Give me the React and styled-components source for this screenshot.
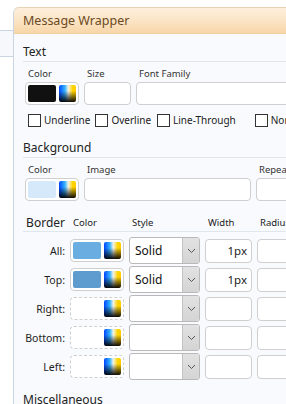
import React from "react";
import styled, { createGlobalStyle } from "styled-components";

const Global = createGlobalStyle`
  html, body { margin: 0; padding: 0; background: #ffffff; }
  body { font-family: "Noto Sans", "Open Sans", sans-serif; color: #222; }
  * { box-sizing: border-box; }
`;

const Page = styled.div`
  width: 286px;
  height: 404px;
  overflow: hidden;
  display: flex;
  align-items: flex-start;
  background: #ffffff;
`;

const Strip = styled.div`
  width: 13px;
  flex: none;
  display: flex;
  flex-direction: column;
`;

const StripTop = styled.div`
  height: 31px;
  border-bottom: 1px solid #c9d5e1;
`;

const StripTab = styled.div`
  height: 26px;
  background: #f6f8fb;
  border-bottom: 1px solid #c9d5e1;
`;

const Panel = styled.div`
  flex: 1;
  min-width: 0;
  height: 420px;
  margin-top: 7px;
  display: flex;
  flex-direction: column;
  border-left: 1px solid #c9d5e1;
  border-top-left-radius: 6px;
  background: #f9fafd;
`;

const Header = styled.div`
  flex: none;
  height: 27px;
  display: flex;
  align-items: center;
  padding-left: 9px;
  border-top: 1px solid #e6d3b3;
  border-bottom: 1px solid #efcf9c;
  border-top-left-radius: 5px;
  background: linear-gradient(to bottom, #fdefdc 0%, #fbe3c3 55%, #f8d6a8 100%);
  color: #6b4a22;
  font-size: 12.5px;
  white-space: nowrap;
`;

const Body = styled.div`
  flex: none;
  padding: 10px 0 0 9px;
  display: flex;
  flex-direction: column;
  white-space: nowrap;
`;

const SectionTitle = styled.div`
  font-size: 12px;
  line-height: 16px;
  height: 18px;
  color: #222;
  border-bottom: 1px solid #dfe6ee;
  margin-top: ${(p) => p.$mt || 0}px;
`;

const FieldRow = styled.div`
  display: flex;
  gap: 5px;
  padding-left: 2px;
  margin-top: 6px;
`;

const Field = styled.div`
  display: flex;
  flex-direction: column;
  gap: 2px;
  width: ${(p) => p.$w}px;
  flex: none;
`;

const Label = styled.div`
  font-size: 9.5px;
  line-height: 12px;
  height: 12px;
  padding-left: 3px;
  color: #333;
`;

const Input = styled.div`
  height: 23px;
  border: 1px solid #cfcfcf;
  border-radius: 4px;
  background: #ffffff;
  font-size: 11.5px;
  line-height: 21px;
  text-align: right;
  padding-right: 4px;
  color: #222;
`;

const Swatch = styled.div`
  width: 54px;
  height: 23px;
  border: 1px ${(p) => (p.$empty ? "dashed #cfcfcf" : "solid #cfcfcf")};
  border-radius: 4px;
  background: #ffffff;
  display: flex;
  align-items: center;
  gap: 3px;
  padding: 0 2px 0 2px;
`;

const Chip = styled.div`
  width: 29px;
  height: 17px;
  border-radius: 2px;
  background: ${(p) => p.$c || "transparent"};
`;

const Picker = styled.div`
  width: 17px;
  height: 17px;
  border-radius: 2px;
  background:
    linear-gradient(to bottom, rgba(0, 0, 0, 0) 35%, rgba(0, 0, 0, 0.95) 100%),
    linear-gradient(to right, #0044ff 0%, #35b4ff 35%, #f4f2e6 55%, #ffd400 80%, #ffcc00 100%);
`;

const ChecksRow = styled.div`
  display: flex;
  align-items: center;
  padding-left: 5px;
  margin-top: 8px;
  height: 14px;
`;

const Check = styled.label`
  display: flex;
  align-items: center;
  gap: 3px;
  font-size: 10px;
  color: #222;
  margin-right: ${(p) => p.$mr}px;
`;

const Box = styled.span`
  width: 13px;
  height: 13px;
  border: 1px solid #333;
  background: #fff;
  flex: none;
`;

const cols = "42px 54px 71px 47px 47px";

const BorderGrid = styled.div`
  display: grid;
  grid-template-columns: ${cols};
  column-gap: 5px;
  row-gap: 2px;
  align-items: center;
`;

const BorderHead = styled.div`
  display: grid;
  grid-template-columns: ${cols};
  column-gap: 5px;
  align-items: end;
  height: 18px;
  border-bottom: 1px solid #dfe6ee;
  margin-top: 13px;
  margin-bottom: 5px;
`;

const HeadCell = styled.div`
  font-size: ${(p) => (p.$big ? "12px" : "9.5px")};
  line-height: 16px;
  padding-left: ${(p) => (p.$big ? 0 : 3)}px;
  text-align: ${(p) => (p.$big ? "right" : "left")};
  color: #222;
`;

const RowLabel = styled.div`
  font-size: 10.5px;
  text-align: right;
  color: #222;
`;

const Select = styled.div`
  height: 27px;
  border: 1px solid #b9b9b9;
  border-radius: 3px;
  background: #ffffff;
  display: flex;
  overflow: hidden;
`;

const SelectText = styled.div`
  flex: 1;
  font-size: 12px;
  line-height: 25px;
  padding-left: 5px;
  color: #111;
`;

const SelectBtn = styled.div`
  width: 17px;
  background: linear-gradient(to bottom, #e2e2e2, #d4d4d4);
  border-left: 1px solid #c2c2c2;
  display: flex;
  align-items: center;
  justify-content: center;
`;

const Cell = styled(Input)`
  height: 24px;
  line-height: 22px;
`;

const Chevron = () => (
  <svg width="9" height="6" viewBox="0 0 9 6">
    <path d="M1 1 L4.5 4.5 L8 1" fill="none" stroke="#555" strokeWidth="1" />
  </svg>
);

const ColorSwatch = ({ c, empty }) => (
  <Swatch $empty={empty}>
    <Chip $c={c} />
    <Picker />
  </Swatch>
);

const rows = [
  { l: "All:", c: "#6aade0", s: "Solid", w: "1px" },
  { l: "Top:", c: "#5e9ccf", s: "Solid", w: "1px" },
  { l: "Right:", empty: true },
  { l: "Bottom:", empty: true },
  { l: "Left:", empty: true },
];

export default function App() {
  return (
    <>
      <Global />
      <Page>
        <Strip>
          <StripTop />
          <StripTab />
        </Strip>
        <Panel>
          <Header>Message Wrapper</Header>
          <Body>
            <SectionTitle>Text</SectionTitle>
            <FieldRow>
              <Field $w={54}>
                <Label>Color</Label>
                <ColorSwatch c="#111111" />
              </Field>
              <Field $w={47}>
                <Label>Size</Label>
                <Input />
              </Field>
              <Field $w={200}>
                <Label>Font Family</Label>
                <Input />
              </Field>
            </FieldRow>
            <ChecksRow>
              <Check $mr={5}><Box />Underline</Check>
              <Check $mr={6}><Box />Overline</Check>
              <Check $mr={19}><Box />Line-Through</Check>
              <Check $mr={0}><Box />None</Check>
            </ChecksRow>
            <SectionTitle $mt={13}>Background</SectionTitle>
            <FieldRow>
              <Field $w={54}>
                <Label>Color</Label>
                <ColorSwatch c="#d6e9fa" />
              </Field>
              <Field $w={167}>
                <Label>Image</Label>
                <Input />
              </Field>
              <Field $w={80}>
                <Label>Repeat</Label>
                <Input />
              </Field>
            </FieldRow>
            <BorderHead>
              <HeadCell $big>Border</HeadCell>
              <HeadCell>Color</HeadCell>
              <HeadCell>Style</HeadCell>
              <HeadCell>Width</HeadCell>
              <HeadCell>Radius</HeadCell>
            </BorderHead>
            <BorderGrid>
              {rows.map((r) => (
                <React.Fragment key={r.l}>
                  <RowLabel>{r.l}</RowLabel>
                  <ColorSwatch c={r.c} empty={r.empty} />
                  <Select>
                    <SelectText>{r.s || ""}</SelectText>
                    <SelectBtn><Chevron /></SelectBtn>
                  </Select>
                  <Cell>{r.w || ""}</Cell>
                  <Cell />
                </React.Fragment>
              ))}
            </BorderGrid>
            <SectionTitle $mt={12}>Miscellaneous</SectionTitle>
          </Body>
        </Panel>
      </Page>
    </>
  );
}
